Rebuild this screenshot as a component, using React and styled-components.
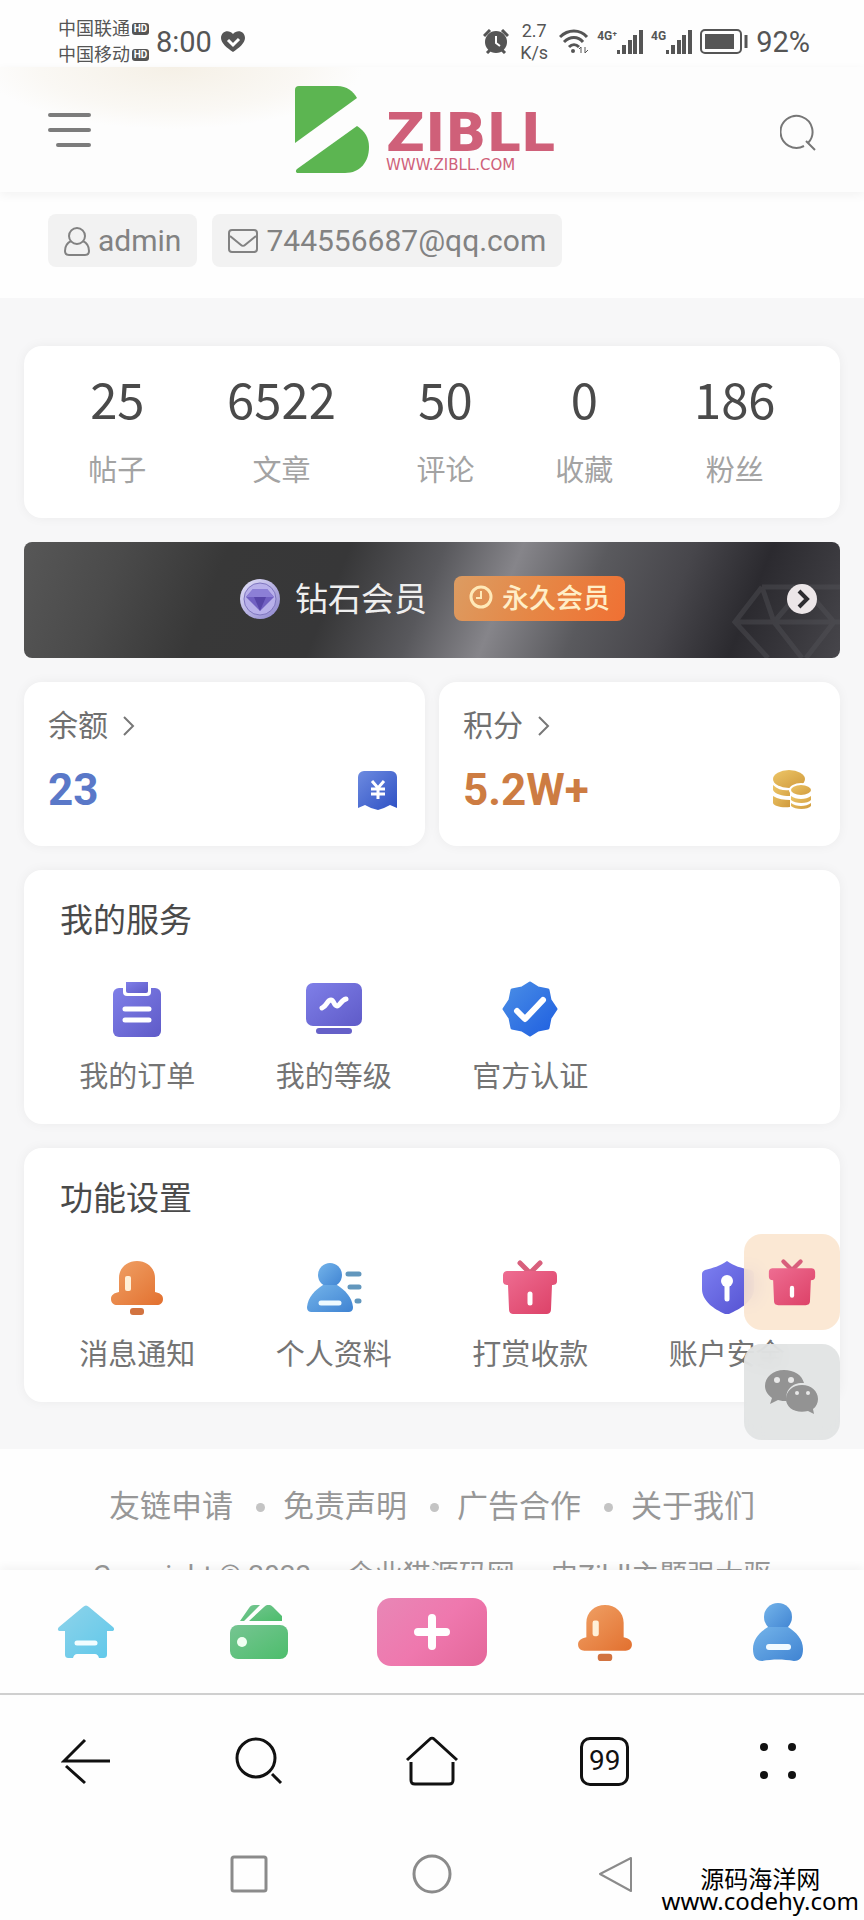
import React from "react";
import styled, { createGlobalStyle } from "styled-components";

const GlobalStyle = createGlobalStyle`
  *, *::before, *::after { box-sizing: border-box; }
  body {
    margin: 0;
    background: #fefefe;
    color: #4a4a4a;
    font-family: Roboto, "Noto Sans CJK SC", sans-serif;
  }
  button { font: inherit; color: inherit; background: none; border: 0; padding: 0; cursor: pointer; }
  a { color: inherit; text-decoration: none; }
  h2, p, ul { margin: 0; padding: 0; }
  ul { list-style: none; }
  svg { display: block; flex: none; }
`;

/* ---------- page frame ---------- */
const Page = styled.div`
  position: relative;
  display: flex;
  flex-direction: column;
  min-height: 100vh;
  overflow: hidden;
`;

/* ---------- phone status bar ---------- */
const StatusBar = styled.div`
  display: flex;
  align-items: center;
  height: 67px;
  padding: 16px 54px 0 58px;
  color: #555;
`;
const Carriers = styled.div`
  display: grid;
  gap: 2px;
  font-size: 18px;
  line-height: 24px;
`;
const Carrier = styled.div`
  display: flex;
  align-items: center;
  gap: 2px;
`;
const HdBadge = styled.span`
  width: 17px;
  border-radius: 3px;
  background: #555;
  color: #fff;
  font-size: 10px;
  font-weight: 700;
  line-height: 12px;
  text-align: center;
`;
const StatusText = styled.span`
  font-size: 29px;
  line-height: 34px;
`;
const Clock = styled(StatusText)`
  margin: 0 9px 0 7px;
`;
const StatusRight = styled.div`
  display: flex;
  align-items: center;
  gap: 8px;
  margin-left: auto;
`;
const Speed = styled.div`
  width: 34px;
  font-size: 18px;
  line-height: 22px;
  text-align: center;
`;
const Signal = styled.div`
  display: flex;
  align-items: flex-start;
  font-size: 12px;
  font-weight: 700;
  line-height: 12px;
`;

/* ---------- site header ---------- */
const Header = styled.header`
  display: flex;
  align-items: center;
  justify-content: space-between;
  height: 125px;
  padding: 0 48px;
  background: radial-gradient(ellipse 190px 62px at 20% 0, #f5f0e6 0%, #faf8f4 70%, #fdfdfd 100%);
  box-shadow: 0 3px 10px rgba(0, 0, 0, 0.05);
`;
const IconButton = styled.button`
  display: flex;
`;
const Logo = styled.a`
  display: flex;
  gap: 16px;
`;
const Wordmark = styled.span`
  display: flex;
  flex-direction: column;
  min-width: 190px;
  padding-top: 22px;
  color: #cf6079;
  font-family: "DejaVu Sans", sans-serif;
`;
const LogoName = styled.span`
  font-size: 54px;
  font-weight: 700;
  line-height: 50px;
`;
const LogoUrl = styled.span`
  font-size: 15px;
  line-height: 14px;
`;

/* ---------- profile chips ---------- */
const Chips = styled.div`
  display: flex;
  gap: 15px;
  padding: 22px 48px 31px;
`;
const Chip = styled.span`
  display: flex;
  align-items: center;
  gap: 8px;
  height: 53px;
  padding: 0 16px;
  border-radius: 8px;
  background: #f2f2f2;
  color: #828282;
  font-size: 30px;
`;

/* ---------- content ---------- */
const Main = styled.main`
  position: relative;
  display: flex;
  flex-direction: column;
  gap: 24px;
  padding: 48px 24px 47px;
  background: #f7f7f8;
`;
const Card = styled.section`
  border-radius: 18px;
  background: #fff;
  box-shadow: 0 0 12px rgba(0, 0, 0, 0.05);
`;
const Stats = styled(Card)`
  display: flex;
  justify-content: space-around;
  padding: 24px;
`;
const Stat = styled.a`
  display: flex;
  flex-direction: column;
  align-items: center;
  gap: 22px;
`;
const StatValue = styled.span`
  font-family: "Noto Sans CJK SC", sans-serif;
  font-size: 49px;
  line-height: 56px;
`;
const StatLabel = styled.span`
  color: #a3a3a3;
  font-size: 29px;
  line-height: 46px;
`;

const VipBanner = styled.a`
  position: relative;
  display: flex;
  align-items: center;
  justify-content: center;
  height: 116px;
  padding-bottom: 3px;
  border-radius: 8px;
  overflow: hidden;
  background: linear-gradient(112deg, #575757 0%, #4a4a4a 12%, #383838 24%, #373738 38%, #58585c 49%, #86858a 58%, #5a5a5e 68%, #47464b 78%, #2b2a2f 87%, #39383d 94%, #47464b 100%);
  color: #efefef;
`;
const VipName = styled.span`
  margin: 0 27px 0 14px;
  padding-bottom: 4px;
  font-size: 33px;
`;
const VipBadge = styled.span`
  display: flex;
  align-items: center;
  gap: 9px;
  height: 45px;
  padding: 0 15px 4px;
  border-radius: 8px;
  background: linear-gradient(115deg, #dc9c62 0%, #e68645 50%, #f07033 100%);
  color: #ffeec8;
  font-size: 27px;
  font-weight: 500;
`;
const Watermark = styled.span`
  position: absolute;
  right: 0;
  bottom: 0;
`;
const GoArrow = styled.span`
  position: absolute;
  right: 23px;
  top: 42px;
`;

const Wallets = styled.div`
  display: grid;
  grid-template-columns: 1fr 1fr;
  gap: 14px;
`;
const Wallet = styled(Card)`
  display: flex;
  flex-direction: column;
  gap: 14px;
  height: 164px;
  padding: 23px 28px 0 24px;
`;
const WalletLink = styled.a`
  display: flex;
  align-items: center;
  gap: 14px;
  color: #707070;
  font-size: 30px;
  line-height: 42px;
`;
const WalletRow = styled.div`
  display: flex;
  align-items: center;
  justify-content: space-between;
  line-height: 58px;
`;
const Amount = styled.strong`
  color: ${(p) => p.$color};
  font-size: 44px;
  font-weight: 700;
`;

const Panel = styled(Card)`
  height: 254px;
  padding: 29px 15px 0;
`;
const PanelTitle = styled.h2`
  padding-left: 21px;
  font-size: 33px;
  font-weight: 400;
  line-height: 44px;
`;
const Services = styled.ul`
  display: grid;
  grid-template-columns: repeat(4, 1fr);
  margin-top: 38px;
`;
const Service = styled.a`
  display: flex;
  flex-direction: column;
  align-items: center;
  gap: 19px;
  color: #747474;
  font-size: 29px;
  line-height: 42px;
  white-space: nowrap;
`;

const FloatBar = styled.aside`
  position: absolute;
  right: 24px;
  bottom: 9px;
  display: grid;
  gap: 14px;
`;
const FloatButton = styled.button`
  display: flex;
  align-items: center;
  justify-content: center;
  width: 96px;
  height: 96px;
  border-radius: 18px;
  background: ${(p) => p.$bg};
  backdrop-filter: blur(10px);
`;

/* ---------- footer ---------- */
const Footer = styled.footer`
  height: 121px;
  padding-top: 35px;
  overflow: hidden;
  background: #fefefe;
  color: #979797;
`;
const FooterLinks = styled.ul`
  display: flex;
  justify-content: center;
  gap: 23px;
  font-size: 31px;
  line-height: 46px;
`;
const FooterItem = styled.li`
  display: flex;
  align-items: center;
  gap: 18px;
  & + &::before {
    content: "";
    width: 9px;
    height: 9px;
    border-radius: 50%;
    background: #c4c4c4;
  }
`;
const Copyright = styled.p`
  padding: 24px 85px 0;
  font-size: 28px;
  line-height: 44px;
  text-align: center;
`;

/* ---------- bottom bars ---------- */
const Bar = styled.nav`
  display: grid;
  grid-template-columns: repeat(5, 1fr);
  place-items: center;
`;
const TabBar = styled(Bar)`
  position: relative;
  height: 125px;
  border-bottom: 2px solid #cfcfcf;
  background: #fefefe;
  box-shadow: 0 -4px 8px rgba(0, 0, 0, 0.04);
`;
const PublishButton = styled.button`
  display: flex;
  align-items: center;
  justify-content: center;
  width: 110px;
  height: 68px;
  border-radius: 14px;
  background: linear-gradient(135deg, #e887b6 0%, #ef78ae 50%, #e4679a 100%);
`;
const BrowserBar = styled(Bar)`
  height: 132px;
  color: #111;
`;
const TabCount = styled.button`
  width: 49px;
  height: 49px;
  border: 3px solid #111;
  border-radius: 10px;
  font-size: 28px;
  line-height: 40px;
`;
const SystemBar = styled.nav`
  display: flex;
  align-items: center;
  justify-content: center;
  gap: 144px;
  height: 94px;
  color: #8b8b8b;
`;
const SiteMark = styled.div`
  position: absolute;
  right: 5px;
  bottom: 9px;
  color: #000;
  font-family: "Noto Sans", "Noto Sans CJK SC", sans-serif;
  font-size: 24px;
  line-height: 22px;
  text-align: center;
`;

/* ---------- drawings ---------- */
const gradients = {
  purple: ["#7f7fe8", "#5f5bc8"],
  blue: ["#4a8ee6", "#1f5fe0"],
  sky: ["#74b4ea", "#3f83d2"],
  orange: ["#f0a267", "#e2702f"],
  pink: ["#ee6d92", "#dc4066"],
  violet: ["#7d80f2", "#5350d0"],
  navy: ["#6d8be0", "#2e50c4"],
  gold: ["#edc668", "#d09a3c"],
  cyan: ["#8fd3ea", "#5fc8ea"],
  green: ["#76c592", "#4dbd6c"],
  gem: ["#e6e4fa", "#8a82cc"],
};
const HiddenSvg = styled.svg`
  position: absolute;
`;
const Gradients = () => (
  <HiddenSvg width="0" height="0" aria-hidden="true">
    <defs>
      {Object.entries(gradients).map(([id, [from, to]]) => (
        <linearGradient key={id} id={id} x1="0" y1="0" x2="1" y2="1">
          <stop offset="0" stopColor={from} />
          <stop offset="1" stopColor={to} />
        </linearGradient>
      ))}
    </defs>
  </HiddenSvg>
);
const Svg = ({ w, h = w, box, children, ...rest }) => (
  <svg width={w} height={h} viewBox={box || `0 0 ${w} ${h}`} fill="none" aria-hidden="true" {...rest}>
    {children}
  </svg>
);

const OrderIcon = () => (
  <Svg w={56} box="4 -1 56 56">
    <rect x="8" y="6" width="48" height="49" rx="6" fill="url(#purple)" />
    <path d="M18 0h28v10a4 4 0 0 1-4 4H22a4 4 0 0 1-4-4z" fill="#fff" />
    <path d="M21 0h22v9a2 2 0 0 1-2 2H23a2 2 0 0 1-2-2z" fill="url(#purple)" />
    <path d="M20 27h24M20 38h24" stroke="#fff" strokeWidth="5" strokeLinecap="round" />
  </Svg>
);
const LevelIcon = () => (
  <Svg w={56}>
    <rect x="0" y="2" width="56" height="43" rx="7" fill="url(#purple)" />
    <path d="M13 50h30" stroke="#6560c8" strokeWidth="6" strokeLinecap="round" />
    <path d="M16 27c5-2 5-8 9-8 3 0 3 6 6 6s4-6 9-7" stroke="#fff" strokeWidth="5" strokeLinecap="round" strokeLinejoin="round" />
  </Svg>
);
const VerifyIcon = () => (
  <Svg w={56}>
    <path d="M28 2l8 5 10 2 2 10 6 9-6 9-2 10-10 2-8 5-8-5-10-2-2-10-6-9 6-9 2-10 10-2z" fill="url(#blue)" stroke="url(#blue)" strokeWidth="3" strokeLinejoin="round" />
    <path d="M15 30l8 8 18-19" stroke="#fff" strokeWidth="6" strokeLinecap="round" strokeLinejoin="round" />
  </Svg>
);
const BellIcon = ({ size = 56 }) => (
  <Svg w={size} box="0 0 56 56">
    <path d="M10 33V19C10 9 18 2 28 2s18 7 18 17v14c5 1 8 3 8 7 0 4-3 6-6 6H8c-3 0-6-2-6-6 0-4 3-6 8-7z" fill="url(#orange)" />
    <rect x="21" y="49" width="14" height="7" rx="3" fill="#d27340" />
    <rect x="16" y="17" width="6" height="15" rx="2" fill="#fff0d8" />
  </Svg>
);
const ProfileIcon = () => (
  <Svg w={56}>
    <circle cx="24" cy="16" r="12" fill="url(#sky)" />
    <path d="M17 26h14c8 5 15 12 16 22 0 4-2 5-5 5H6c-3 0-5-1-5-5 1-10 8-17 16-22z" fill="url(#sky)" />
    <path d="M15 44h18" stroke="#eefaff" strokeWidth="5" strokeLinecap="round" />
    <path d="M42 15h11M44 28h9M51 42h2" stroke="#6297bd" strokeWidth="5" strokeLinecap="round" />
  </Svg>
);
const GiftIcon = ({ size = 56 }) => (
  <Svg w={size} box="0 0 56 56">
    <path d="M18 4l10 10L38 4" stroke="#d85f7c" strokeWidth="5" strokeLinecap="round" />
    <path d="M6 12h44c3 0 5 1 5 5v5c0 3-2 4-5 4l-1 24c0 4-2 5-5 5H12c-3 0-5-1-5-5L6 26c-3 0-5-1-5-4v-5c0-4 2-5 5-5z" fill="url(#pink)" />
    <path d="M28 35v9" stroke="#fff" strokeWidth="5" strokeLinecap="round" />
  </Svg>
);
const ShieldIcon = () => (
  <Svg w={56}>
    <path d="M28 2c7 5 14 7 24 9 2 1 3 2 3 4v15c0 12-14 20-25 25h-4C15 50 3 42 3 30V15c0-2 1-3 3-4C14 9 21 7 28 2z" fill="url(#violet)" />
    <circle cx="28" cy="22" r="6" fill="#fff" />
    <path d="M28 24v16" stroke="#fff" strokeWidth="5" strokeLinecap="round" />
  </Svg>
);
const TicketIcon = () => (
  <Svg w={39}>
    <path d="M6 0h27a6 6 0 0 1 6 6v31l-7-3-6 3-6 2-7-2-6-3-7 3V6a6 6 0 0 1 6-6z" fill="url(#navy)" />
    <path d="M14 10l6 7 6-7M20 17v11M13 18h14M13 23h14" stroke="#fff" strokeWidth="3" />
  </Svg>
);
const CoinsIcon = () => (
  <Svg w={40}>
    <ellipse cx="17" cy="9" rx="16" ry="9" fill="url(#gold)" />
    <path d="M1 15c5 5 12 6 17 5v6C10 26 3 24 1 20zM1 26c5 3 11 4 17 4v7C9 38 2 36 1 33z" fill="url(#gold)" />
    <ellipse cx="29" cy="20" rx="11" ry="6" fill="url(#gold)" stroke="#fff" strokeWidth="2" />
    <path d="M19 26c5 4 15 4 20 0v4c-3 4-16 4-20 0zM19 33c5 4 15 4 20 0v3c-3 4-16 4-20 0z" fill="url(#gold)" />
  </Svg>
);
const DiamondCoin = () => (
  <Svg w={42}>
    <circle cx="21" cy="21" r="20" fill="url(#gem)" />
    <circle cx="21" cy="21" r="16" fill="#b8b0ea" stroke="#7f76be" strokeWidth="1" />
    <path d="M14 11h14l7 8-14 14L7 19z" fill="#7160c2" />
    <path d="M14 11h14l7 8H7z" fill="#8c7fd6" />
    <path d="M15 19l6 14 6-14z" fill="#5745a8" />
  </Svg>
);
const WechatIcon = () => (
  <Svg w={56} h={46}>
    <path d="M20 1C9 1 1 8 1 17c0 5 3 9 7 12l-2 6 8-4c3 1 6 1 9 1-3-11 6-19 17-18C38 6 30 1 20 1z" fill="#939393" />
    <path d="M38 16c9 0 16 6 16 14 0 4-2 8-5 10l1 5-6-3c-12 3-22-3-22-12 0-8 7-14 16-14z" fill="#939393" />
    <circle cx="13" cy="11" r="3" fill="#e8e8e8" />
    <circle cx="27" cy="11" r="3" fill="#e8e8e8" />
    <circle cx="33" cy="24" r="2" fill="#e8e8e8" />
    <circle cx="44" cy="24" r="2" fill="#e8e8e8" />
  </Svg>
);
const HomeIcon = () => (
  <Svg w={58} h={54}>
    <path d="M26 2c2-2 4-2 6 0l24 20c2 2 1 4-1 4h-5v23c0 3-1 4-4 4h-4c-1-3-2-4-4-4H20c-2 0-3 1-4 4h-4c-3 0-4-1-4-4V26H3c-2 0-3-2-1-4z" fill="url(#cyan)" />
    <path d="M20 38h18" stroke="#f2fdff" strokeWidth="5" strokeLinecap="round" />
  </Svg>
);
const WalletIcon = () => (
  <Svg w={58} h={54}>
    <path d="M19 3c1-2 3-3 5-3h6L14 16h-4zM34 2c3-3 6-3 9 0l9 9v5H19z" fill="url(#green)" />
    <rect x="0" y="20" width="58" height="34" rx="8" fill="url(#green)" />
    <circle cx="12" cy="37" r="5" fill="#f0fff2" />
  </Svg>
);
const MeIcon = () => (
  <Svg w={50} h={58}>
    <circle cx="25" cy="14" r="14" fill="url(#sky)" />
    <path d="M15 24h20c8 5 15 12 15 22 0 8-3 12-9 12-11-2-21-2-32 0-6 0-9-4-9-12 0-10 7-17 15-22z" fill="url(#sky)" />
    <path d="M16 44h19" stroke="#f2faff" strokeWidth="6" strokeLinecap="round" />
  </Svg>
);
const Bars = () => (
  <Svg w={26} h={24} fill="currentColor">
    <path d="M0 20h3v4H0zM5 15h4v9H5zM11 10h4v14h-4zM16 5h4v19h-4zM22 0h4v24h-4z" />
  </Svg>
);
const Chevron = () => (
  <Svg w={14} h={20}>
    <path d="M2 1l9 9-9 9" stroke="#777" strokeWidth="2" />
  </Svg>
);

const stats = [
  ["25", "帖子"],
  ["6522", "文章"],
  ["50", "评论"],
  ["0", "收藏"],
  ["186", "粉丝"],
];
const services = [
  ["我的订单", OrderIcon],
  ["我的等级", LevelIcon],
  ["官方认证", VerifyIcon],
];
const settings = [
  ["消息通知", BellIcon],
  ["个人资料", ProfileIcon],
  ["打赏收款", GiftIcon],
  ["账户安全", ShieldIcon],
];

const ServicePanel = ({ title, items }) => (
  <Panel>
    <PanelTitle>{title}</PanelTitle>
    <Services>
      {items.map(([label, Icon]) => (
        <li key={label}>
          <Service href="#">
            <Icon />
            {label}
          </Service>
        </li>
      ))}
    </Services>
  </Panel>
);

export default function App() {
  return (
    <Page>
      <GlobalStyle />
      <Gradients />
      <StatusBar>
        <Carriers>
          <Carrier>中国联通<HdBadge>HD</HdBadge></Carrier>
          <Carrier>中国移动<HdBadge>HD</HdBadge></Carrier>
        </Carriers>
        <Clock>8:00</Clock>
        <Svg w={24} h={21}>
          <path d="M12 21C6 17 0 12 0 7c0-7 8-9 12-4 4-5 12-3 12 4 0 5-6 10-12 14z" fill="#555" />
          <path d="M7 9l5 5 6-6" stroke="#fff" strokeWidth="3" />
        </Svg>
        <StatusRight>
          <Svg w={26} h={25}>
            <circle cx="13" cy="13" r="11" fill="#555" />
            <path d="M1 7l6-6M25 7l-6-6M4 24l4-4M22 24l-4-4" stroke="#555" strokeWidth="3" />
            <path d="M13 7v7l4 3" stroke="#fff" strokeWidth="2" />
          </Svg>
          <Speed>2.7<br />K/s</Speed>
          <Svg w={30} h={25}>
            <path d="M1 8c8-8 20-8 27 0M5 13c6-6 14-6 19 0M10 18c3-3 7-3 10 0" stroke="#555" strokeWidth="3" />
            <circle cx="14" cy="22" r="2" fill="#555" />
            <path d="M22 24v-6l-2 2M26 18v6l3-3" stroke="#555" strokeWidth="1" />
          </Svg>
          <Signal>4G⁺<Bars /></Signal>
          <Signal>4G<Bars /></Signal>
          <Svg w={48} h={25}>
            <rect x="1" y="1" width="40" height="23" rx="4" stroke="#555" strokeWidth="2" />
            <rect x="5" y="5" width="29" height="15" fill="#555" />
            <path d="M46 6v13" stroke="#555" strokeWidth="3" />
          </Svg>
          <StatusText>92%</StatusText>
        </StatusRight>
      </StatusBar>

      <Header>
        <IconButton aria-label="菜单">
          <Svg w={43} h={36}>
            <path d="M2 3h39M2 18h39M10 33h31" stroke="#7c7c7c" strokeWidth="4" strokeLinecap="round" />
          </Svg>
        </IconButton>
        <Logo href="#" aria-label="ZIBLL">
          <Svg w={75} h={88}>
            <path d="M4 0h38c10 0 16 5 20 12L0 57V4a4 4 0 0 1 4-4z" fill="#5cb551" />
            <path d="M62 40c8 5 12 12 12 21 0 15-9 26-24 26H3c-2 0-3-2-1-4z" fill="#5cb551" />
          </Svg>
          <Wordmark>
            <LogoName>ZIBLL</LogoName>
            <LogoUrl>WWW.ZIBLL.COM</LogoUrl>
          </Wordmark>
        </Logo>
        <IconButton aria-label="搜索">
          <Svg w={36} h={44} box="0 -6 36 44">
            <path d="M24 32a16 16 0 1 1 4-3M26 27l9 9" stroke="#777" strokeWidth="2" />
          </Svg>
        </IconButton>
      </Header>

      <Chips>
        <Chip>
          <Svg w={26} h={30}>
            <circle cx="13" cy="10" r="8" stroke="#828282" strokeWidth="2" />
            <path d="M7 15c-4 2-6 6-6 10 0 3 2 4 4 4h16c2 0 4-1 4-4 0-4-2-8-6-10" stroke="#828282" strokeWidth="2" />
          </Svg>
          admin
        </Chip>
        <Chip>
          <Svg w={30} h={26}>
            <rect x="1" y="2" width="28" height="22" rx="3" stroke="#828282" strokeWidth="2" />
            <path d="M2 8l11 9c1 1 3 1 4 0l11-9" stroke="#828282" strokeWidth="2" />
          </Svg>
          744556687@qq.com
        </Chip>
      </Chips>

      <Main>
        <Stats>
          {stats.map(([value, label]) => (
            <Stat key={label} href="#">
              <StatValue>{value}</StatValue>
              <StatLabel>{label}</StatLabel>
            </Stat>
          ))}
        </Stats>

        <VipBanner href="#">
          <Watermark>
            <Svg w={108} h={74}>
              <path d="M30 3h78M30 3L3 38l33 36M3 38h105M30 3l12 35 28 36M42 38L72 3l30 35-28 36" stroke="#56555a" strokeWidth="5" opacity="0.4" />
            </Svg>
          </Watermark>
          <DiamondCoin />
          <VipName>钻石会员</VipName>
          <VipBadge>
            <Svg w={24}>
              <circle cx="12" cy="12" r="10" stroke="#ffe9b8" strokeWidth="3" />
              <path d="M12 6v7H7" stroke="#ffe9b8" strokeWidth="2" />
            </Svg>
            永久会员
          </VipBadge>
          <GoArrow>
            <Svg w={30}>
              <circle cx="15" cy="15" r="15" fill="#ece6e8" />
              <path d="M12 7l8 8-8 8" stroke="#2d2c30" strokeWidth="4" />
            </Svg>
          </GoArrow>
        </VipBanner>

        <Wallets>
          <Wallet>
            <WalletLink href="#">余额<Chevron /></WalletLink>
            <WalletRow><Amount $color="#5a78c8">23</Amount><TicketIcon /></WalletRow>
          </Wallet>
          <Wallet>
            <WalletLink href="#">积分<Chevron /></WalletLink>
            <WalletRow><Amount $color="#cd7c42">5.2W+</Amount><CoinsIcon /></WalletRow>
          </Wallet>
        </Wallets>

        <ServicePanel title="我的服务" items={services} />
        <ServicePanel title="功能设置" items={settings} />

        <FloatBar>
          <FloatButton $bg="rgba(250, 228, 205, 0.85)" aria-label="礼物"><GiftIcon size={48} /></FloatButton>
          <FloatButton $bg="rgba(224, 226, 226, 0.9)" aria-label="微信"><WechatIcon /></FloatButton>
        </FloatBar>
      </Main>

      <Footer>
        <FooterLinks>
          {["友链申请", "免责声明", "广告合作", "关于我们"].map((t) => (
            <FooterItem key={t}><a href="#">{t}</a></FooterItem>
          ))}
        </FooterLinks>
        <Copyright>Copyright © 2023 &emsp;企业猫源码网 &emsp;由Zibll主题强大驱动</Copyright>
      </Footer>

      <TabBar aria-label="站点导航">
        <IconButton aria-label="首页"><HomeIcon /></IconButton>
        <IconButton aria-label="钱包"><WalletIcon /></IconButton>
        <PublishButton aria-label="发布">
          <Svg w={40}>
            <path d="M20 6v28M6 20h28" stroke="#fff" strokeWidth="8" strokeLinecap="round" />
          </Svg>
        </PublishButton>
        <IconButton aria-label="消息"><BellIcon size={58} /></IconButton>
        <IconButton aria-label="我的"><MeIcon /></IconButton>
      </TabBar>

      <BrowserBar aria-label="浏览器">
        <IconButton aria-label="后退">
          <Svg w={50} h={48}>
            <path d="M24 3L3 24h46M5 29l19 17" stroke="#111" strokeWidth="3" />
          </Svg>
        </IconButton>
        <IconButton aria-label="浏览器搜索">
          <Svg w={48}>
            <circle cx="21" cy="21" r="19" stroke="#111" strokeWidth="3" />
            <path d="M37 37l9 9" stroke="#111" strokeWidth="3" />
          </Svg>
        </IconButton>
        <IconButton aria-label="主页">
          <Svg w={54} h={50}>
            <path d="M2 24L25 3c1-1 3-1 4 0l23 21" stroke="#111" strokeWidth="3" />
            <path d="M6 26v18c0 3 1 4 4 4h34c3 0 4-1 4-4V26" stroke="#111" strokeWidth="3" />
          </Svg>
        </IconButton>
        <TabCount aria-label="99 个标签页">99</TabCount>
        <IconButton aria-label="更多">
          <Svg w={38}>
            <g fill="#111">
              <circle cx="5" cy="5" r="4" /><circle cx="33" cy="5" r="4" />
              <circle cx="5" cy="33" r="4" /><circle cx="33" cy="33" r="4" />
            </g>
          </Svg>
        </IconButton>
      </BrowserBar>

      <SystemBar aria-label="系统">
        <IconButton aria-label="最近任务">
          <Svg w={38}><rect x="2" y="2" width="34" height="34" rx="2" stroke="currentColor" strokeWidth="3" /></Svg>
        </IconButton>
        <IconButton aria-label="桌面">
          <Svg w={40}><circle cx="20" cy="20" r="18" stroke="currentColor" strokeWidth="3" /></Svg>
        </IconButton>
        <IconButton aria-label="返回">
          <Svg w={38} h={40}><path d="M35 4L4 20l31 17z" stroke="currentColor" strokeWidth="2" strokeLinejoin="round" /></Svg>
        </IconButton>
      </SystemBar>

      <SiteMark>源码海洋网<br />www.codehy.com</SiteMark>
    </Page>
  );
}
